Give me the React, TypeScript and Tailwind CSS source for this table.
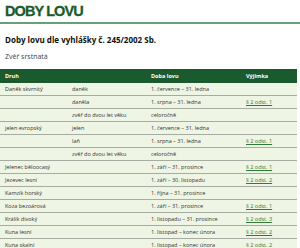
import React from "react";

type Row = { druh?: string; pohlavi?: string; doba: string; vyjimka?: string };

const rows: Row[] = [
  { druh: "Daněk skvrnitý", pohlavi: "daněk", doba: "1. července – 31. ledna" },
  { pohlavi: "daněla", doba: "1. srpna – 31. ledna", vyjimka: "§ 2 odst. 1" },
  { pohlavi: "zvěř do dvou let věku", doba: "celoročně" },
  { druh: "jelen evropský", pohlavi: "jelen", doba: "1. července – 31. ledna" },
  { pohlavi: "laň", doba: "1. srpna – 31. ledna", vyjimka: "§ 2 odst. 1" },
  { pohlavi: "zvěř do dvou let věku", doba: "celoročně" },
  { druh: "Jelenec běloocasý", doba: "1. září – 31. prosince", vyjimka: "§ 2 odst. 1" },
  { druh: "Jezevec lesní", doba: "1. září – 30. listopadu", vyjimka: "§ 2 odst. 2" },
  { druh: "Kamzík horský", doba: "1. října – 31. prosince" },
  { druh: "Koza bezoárová", doba: "1. září – 31. prosince", vyjimka: "§ 2 odst. 1" },
  { druh: "Králík divoký", doba: "1. listopadu – 31. prosince", vyjimka: "§ 2 odst. 3" },
  { druh: "Kuna lesní", doba: "1. listopad – konec února", vyjimka: "§ 2 odst. 2" },
  { druh: "Kuna skalní", doba: "1. listopad – konec února", vyjimka: "§ 2 odst. 2" },
];

export default function App() {
  return (
    <div className="w-[300px] h-[248px] overflow-hidden bg-white text-[#333]" style={{ fontFamily: '"Open Sans", "Noto Sans", sans-serif' }}>
      {/* header */}
      <header className="h-[24px] border-b-2 border-[#6b9f76] px-[5px] flex items-center">
        <h1
          className="text-[#1d5a2c] text-[14.5px] font-bold leading-none tracking-[-0.9px] whitespace-nowrap [-webkit-text-stroke:0.3px_#1d5a2c]"
          style={{ fontFamily: '"Liberation Sans Narrow", "Arial Narrow", sans-serif' }}
        >
          DOBY LOVU
        </h1>
      </header>

      <main className="pr-[3px]">
        <h2 className="px-[5px] pt-[11px] text-[8px] font-bold text-[#111] leading-[10px] whitespace-nowrap">
          Doby lovu dle vyhlášky č. 245/2002 Sb.
        </h2>
        <p className="px-[5px] pt-[7px] text-[7px] leading-[10px] text-[#444]">Zvěř srstnatá</p>

        <div className="mt-[7px] text-[5.5px]">
          <div className="grid grid-cols-[67px_79px_95px_56px] h-[14px] items-center bg-[#1b5a2e] text-white font-bold">
            <div className="px-[5px]">Druh</div>
            <div className="px-[5px]"></div>
            <div className="px-[5px]">Doba lovu</div>
            <div className="px-[5px]">Výjimka</div>
          </div>
          {rows.map((r, i) => (
            <div
              key={i}
              className="grid grid-cols-[67px_79px_95px_56px] h-[13px] items-center bg-[#eef5e5] border-b border-[#a6aca2]"
            >
              <div className="px-[5px] whitespace-nowrap">{r.druh}</div>
              <div className="px-[5px] whitespace-nowrap">{r.pohlavi}</div>
              <div className="px-[5px] whitespace-nowrap">{r.doba}</div>
              <div className="px-[5px] whitespace-nowrap">
                {r.vyjimka && <a className="text-[#2d7a3a] underline">{r.vyjimka}</a>}
              </div>
            </div>
          ))}
        </div>
      </main>
    </div>
  );
}
